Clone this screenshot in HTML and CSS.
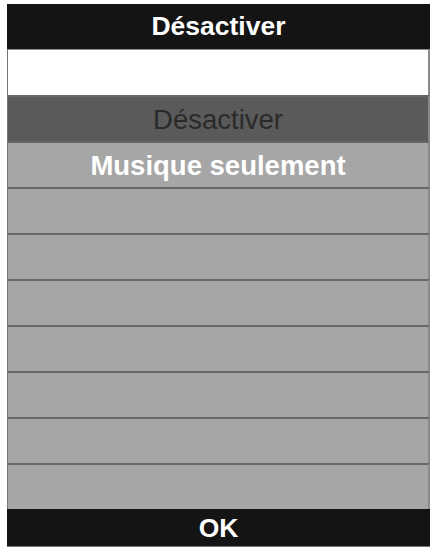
FILE: index.html
```html
<html>
  <head>
    <title>Désactiver</title>
    <link rel="stylesheet" href="styles.css">
  </head>
  <body>
    <div class="dialog">
      <div class="title">Désactiver</div>
      <div class="list">
        <div class="row row-blank"></div>
        <div class="row row-current">Désactiver</div>
        <div class="row row-option">Musique seulement</div>
        <div class="row"></div>
        <div class="row"></div>
        <div class="row"></div>
        <div class="row"></div>
        <div class="row"></div>
        <div class="row"></div>
        <div class="row"></div>
      </div>
      <div class="ok">OK</div>
    </div>
  </body>
</html>
```

FILE: styles.css
```css
body {
  margin: 0;
  padding: 4px 0 0 7px;
  background: #ffffff;
  font-family: "Liberation Sans", Arial, sans-serif;
}

.dialog {
  width: 423px;
  display: flex;
  flex-direction: column;
  border-bottom: 1px solid #777777;
}

.title,
.ok {
  background-color: #141414;
  color: #ffffff;
  font-weight: bold;
  font-size: 26.5px;
  text-align: center;
}

.title {
  height: 45px;
  line-height: 44px;
}

.ok {
  height: 37px;
  line-height: 38px;
}

.list {
  display: flex;
  flex-direction: column;
}

.row {
  height: 44px;
  border-top: 2px solid #686868;
  border-left: 1px solid #777777;
  border-right: 2px solid #8a8a8a;
  background-color: #a6a6a6;
  font-size: 27.5px;
  line-height: 46px;
  text-align: center;
}

.row-blank {
  background-color: #ffffff;
  border-top: 1px solid #8a8a8a;
  height: 45px;
}

.row-current {
  background-color: #5a5a5a;
  color: #2a2a2a;
}

.row-option {
  color: #ffffff;
  font-weight: bold;
}
```
